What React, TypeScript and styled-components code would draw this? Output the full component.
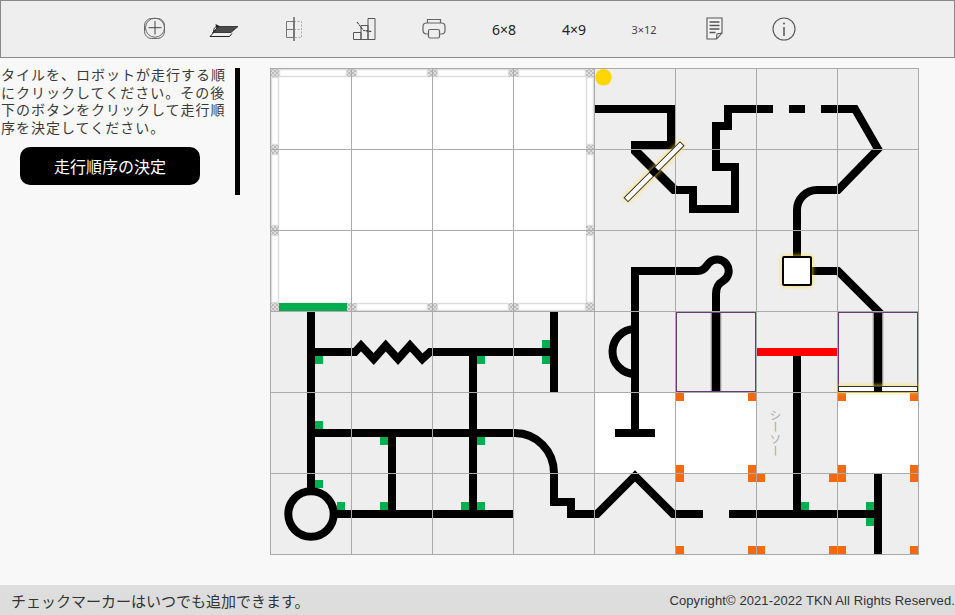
import { createGlobalStyle, styled } from "styled-components";

const GlobalStyle = createGlobalStyle`
    html, body {
        margin: 0;
        padding: 0;
        background-color: #f8f8f8;
        font-family: "Noto Sans CJK JP", "Noto Sans", sans-serif;
    }
`

const Wrapper = styled.div`
    display: flex;
    flex-direction: column;
    width: 955px;
    height: 615px;
    overflow: hidden;
`

const Toolbar = styled.div`
    display: flex;
    align-items: center;
    box-sizing: border-box;
    height: 58px;
    padding-left: 118px;
    background-color: #eeeeee;
    border: 1px solid #888888;
`

const ToolButton = styled.div`
    display: flex;
    align-items: center;
    justify-content: center;
    box-sizing: border-box;
    width: 70px;
    height: 56px;
    padding-bottom: 2px;
`

const SizeButton = styled.div<{ $small?: boolean }>`
    display: flex;
    align-items: center;
    justify-content: center;
    width: 70px;
    height: 56px;
    font-family: "Noto Sans", sans-serif;
    font-size: ${(props) => (props.$small ? "11px" : "14px")};
    color: ${(props) => (props.$small ? "#444444" : "#222222")};
`

const Main = styled.div`
    display: flex;
    flex: 1;
    padding-top: 10px;
`

const Side = styled.div`
    width: 235px;
    flex-shrink: 0;
`

const Guide = styled.p`
    width: 226px;
    margin: -2px 0 0 1px;
    font-size: 14px;
    letter-spacing: 1px;
    line-height: 17.5px;
    color: #3a3a3a;
`

const DecideButton = styled.button`
    display: block;
    width: 180px;
    height: 38px;
    margin: 11px 0 0 20px;
    padding: 0;
    border: none;
    border-radius: 10px;
    background-color: #000000;
    color: #ffffff;
    font-family: inherit;
    font-size: 16px;
`

const Splitter = styled.div`
    width: 5px;
    height: 127px;
    flex-shrink: 0;
    background-color: #000000;
`

const Board = styled.div`
    position: relative;
    display: grid;
    grid-template-columns: repeat(8, 81px);
    grid-template-rows: repeat(6, 81px);
    align-self: flex-start;
    margin-left: 30px;
    border-right: 1px solid #aaaaaa;
    border-bottom: 1px solid #aaaaaa;
`

const Tile = styled.div<{ $white: boolean }>`
    border-left: 1px solid #aaaaaa;
    border-top: 1px solid #aaaaaa;
    background-color: ${(props) => (props.$white ? "#ffffff" : "#eeeeee")};
    svg {
        display: block;
        width: 80px;
        height: 80px;
    }
`

const ArtDefs = styled.svg`
    position: absolute;
    width: 0;
    height: 0;
`

const Overlay = styled.svg`
    position: absolute;
    top: 0;
    left: 0;
    width: 649px;
    height: 487px;
    pointer-events: none;
`

const Glow = styled.g`
    filter: drop-shadow(0 0 2.5px #ffdc40);
`

const SeesawLabel = styled.span`
    position: absolute;
    left: 498px;
    top: 341px;
    writing-mode: vertical-rl;
    font-size: 12px;
    line-height: 14px;
    color: #aaaaaa;
`

const Footer = styled.div`
    display: flex;
    align-items: center;
    justify-content: space-between;
    height: 30px;
    padding-left: 11px;
    background-color: #dddddd;
`

const Notice = styled.span`
    font-size: 15px;
    color: #333333;
`

const Copyright = styled.span`
    font-family: "Liberation Sans", sans-serif;
    font-size: 13px;
    letter-spacing: 0.1px;
    color: #333333;
    white-space: nowrap;
`

const black = { fill: "none", stroke: "#000", strokeWidth: 8 };

// 白いタイル (列,行)
const whiteTiles = new Set([
    "0,0", "1,0", "2,0", "3,0",
    "0,1", "1,1", "2,1", "3,1",
    "0,2", "1,2", "2,2", "3,2",
    "4,4", "5,4", "7,4",
]);

const greens = [
    [315, 356], [477, 356], [542, 340], [542, 356], [315, 421], [380, 437], [477, 437],
    [315, 480], [337, 502], [380, 502], [461, 502], [477, 502],
    [801, 502], [866, 502], [866, 518],
];

const oranges: number[][] = [];
[676, 748, 838, 910].forEach((x) => [393, 465].forEach((y) => oranges.push([x, y])));
[676, 748, 757, 829, 838, 910].forEach((x) => [474, 546].forEach((y) => oranges.push([x, y])));

const hStrips = [[279, 347], [356, 428], [437, 509], [518, 586]];
const vStrips = [[77, 145], [154, 226], [235, 303]];
const hChecks = [[271, 279], [347, 356], [428, 437], [509, 518], [586, 594]];
const vChecks = [[69, 77], [145, 154], [226, 235], [303, 311]];

function BoardArt() {
    return (
        <ArtDefs>
            <defs>
                <pattern id="check" width="4" height="4" patternUnits="userSpaceOnUse">
                    <rect width="4" height="4" fill="#dddddd" />
                    <rect width="2" height="2" fill="#bbbbbb" />
                    <rect x="2" y="2" width="2" height="2" fill="#bbbbbb" />
                </pattern>
                <g id="board-art">
                    {hStrips.map(([a, b]) =>
                        [69, 303].map((y) => (
                            <rect key={a + "-" + y} x={a + 0.5} y={y + 0.5} width={b - a - 1} height={7} fill="#fff" stroke="#dddddd" strokeWidth="1.5" />
                        ))
                    )}
                    {vStrips.map(([a, b]) =>
                        [271, 586].map((x) => (
                            <rect key={a + "-" + x} x={x + 0.5} y={a + 0.5} width={7} height={b - a - 1} fill="#fff" stroke="#dddddd" strokeWidth="1.5" />
                        ))
                    )}
                    {hChecks.map(([a, b]) =>
                        [69, 303].map((y) => (
                            <rect key={a + "c" + y} x={a} y={y} width={b - a} height={8} fill="url(#check)" />
                        ))
                    )}
                    {vChecks.map(([a, b]) =>
                        [271, 586].map((x) => (
                            <rect key={a + "c" + x} x={x} y={a} width={8} height={b - a} fill="url(#check)" />
                        ))
                    )}
                    <rect x="279" y="303" width="68" height="8" fill="#00ad4e" />

                    {greens.map(([x, y]) => (
                        <rect key={x + "g" + y} x={x} y={y} width="8" height="8" fill="#00b050" />
                    ))}
                    {oranges.map(([x, y]) => (
                        <rect key={x + "o" + y} x={x} y={y} width="8" height="8" fill="#f5690f" />
                    ))}

                    {/* 左下のコース */}
                    <path {...black} d="M311 311V490" />
                    <circle {...black} fill="#eeeeee" cx="311" cy="514" r="22.7" />
                    <path {...black} d="M315 352H355L361 345.500L373.700 359L385.700 345.500L398 359L410 345.500L422.300 359L430 352H554" />
                    <path {...black} d="M554 311V392" />
                    <path {...black} d="M473 352V514" />
                    <path {...black} d="M311 433H515A39 40 0 0 1 554 473V502H571V514H597L635 476L673 514H703" />
                    <path {...black} d="M392 433V514" />
                    <path {...black} d="M337 514H513" />

                    {/* 右上のコース */}
                    <path {...black} d="M595 109H671V145H631" />
                    <path fill="#000" d="M631 149.500H640.500L677 186V194H672L631 153Z" />
                    <path {...black} d="M675 190H693V209H735V167H716V126H728V109H773" />
                    <path {...black} d="M789 109H805" />
                    <path {...black} d="M821 109H855L878 149L838 190H817A20 20 0 0 0 797 210V265" />
                    <path {...black} d="M812 271H838L881 314" />

                    {/* ループ */}
                    <path {...black} d="M635 392V271H698C705 271 706 266 709 263A11.500 11.500 0 1 1 723 281C718 284 716 287 716 294V392" />
                    <path {...black} d="M635 311V329M639 329H635A22.500 22.500 0 0 0 635 374H639M635 374V433M615 433H655" />

                    {/* トンネル */}
                    <path fill="none" stroke="#000" strokeOpacity="0.12" strokeWidth="12" d="M716 312V392M878 312V392" />
                    <path fill="none" stroke="#000" strokeOpacity="0.3" strokeWidth="10" d="M716 312V392M878 312V392" />
                    <path {...black} d="M878 311V392" />
                    <rect x="676.500" y="312.500" width="79" height="79" fill="none" stroke="#6b3a78" />
                    <rect x="838.500" y="312.500" width="79" height="79" fill="none" stroke="#6b3a78" />

                    {/* シーソー */}
                    <path {...black} d="M797 352V514" />
                    <rect x="757" y="348" width="80" height="8" fill="#ff0000" />
                    <path {...black} d="M729 514H878" />
                    <path {...black} d="M878 474V554" />
                </g>
            </defs>
        </ArtDefs>
    );
}

function PlusIcon() {
    return (
        <svg width="24" height="24" viewBox="0 0 24 24" fill="none" stroke="#666" strokeWidth="1">
            <rect x="2.500" y="2.500" width="20" height="20" rx="7" />
            <circle cx="13" cy="11.700" r="9.500" />
            <path d="M13 5V18.500M6.500 11.700H19.500" stroke="#444" />
        </svg>
    );
}

function TiltIcon() {
    return (
        <svg width="30" height="28" viewBox="0 -11 30 28">
            <path d="M9.500 1.500H29L22 7.500H3.500Z" fill="#4a4a4a" stroke="#222" strokeWidth="0.800" />
            <path d="M7 5L1 11.500H20.500L23 8.500" fill="none" stroke="#222" strokeWidth="1" />
            <path d="M4.500 6.500C4.500 3.500 6 1.500 9 1" fill="none" stroke="#333" strokeWidth="1" />
            <path d="M6.500 -1L10.500 1L7.500 4Z" fill="#222" />
        </svg>
    );
}

function MirrorIcon() {
    return (
        <svg width="18" height="26" viewBox="0 -2 18 26" fill="none" stroke="#777" strokeWidth="1">
            <path d="M1.500 4.500H9V20.500H1.500ZM1.500 12.500H9" />
            <path d="M9 4.500H16.500V20.500H9M9 12.500H16.500" strokeDasharray="2 1.500" stroke="#aaa" />
            <path d="M9 0V24" stroke="#666" strokeWidth="1.500" />
        </svg>
    );
}

function StairsIcon() {
    return (
        <svg width="24" height="26" viewBox="0 -2 24 26" fill="none" stroke="#555" strokeWidth="1">
            <path d="M1.500 22.500V15.500H9V22.500ZM9 22.500V8.500H16V22.500ZM16 22.500V1.500H23V22.500Z" />
            <path d="M5 5L11.500 13.500L20 14.500" stroke="#222" strokeDasharray="2.500 0.700" />
        </svg>
    );
}

function PrintIcon() {
    return (
        <svg width="24" height="22" viewBox="0 -1 24 22" fill="none" stroke="#666" strokeWidth="1.200">
            <path d="M5.500 5V1.500H18.500V5" />
            <rect x="1" y="5" width="22" height="11" rx="3.500" />
            <rect x="6.500" y="11.500" width="11" height="8.500" rx="1.500" fill="#eeeeee" />
        </svg>
    );
}

function NoteIcon() {
    return (
        <svg width="17" height="23" viewBox="0 0 17 23" fill="none" stroke="#555" strokeWidth="1.100">
            <path d="M1 1H16V16L10.500 22H1Z" fill="#f4f4f4" />
            <path d="M3.500 5H13.500M3.500 8.500H13.500M3.500 12H13.500M3.500 15.500H9.500" strokeWidth="1.300" />
            <path d="M16 16L11 17L10.500 22" />
        </svg>
    );
}

function InfoIcon() {
    return (
        <svg width="24" height="26" viewBox="0 -2 24 26" fill="none" stroke="#555" strokeWidth="1.100">
            <circle cx="12" cy="12" r="11" />
            <path d="M12 10V19" strokeWidth="1.500" />
            <circle cx="12" cy="6.500" r="1" fill="#555" stroke="none" />
        </svg>
    );
}

const rows = [0, 1, 2, 3, 4, 5];
const cols = [0, 1, 2, 3, 4, 5, 6, 7];

function App() {
    return (
        <Wrapper>
            <GlobalStyle />
            <BoardArt />
            <Toolbar>
                <ToolButton><PlusIcon /></ToolButton>
                <ToolButton><TiltIcon /></ToolButton>
                <ToolButton><MirrorIcon /></ToolButton>
                <ToolButton><StairsIcon /></ToolButton>
                <ToolButton><PrintIcon /></ToolButton>
                <SizeButton>6×8</SizeButton>
                <SizeButton>4×9</SizeButton>
                <SizeButton $small>3×12</SizeButton>
                <ToolButton><NoteIcon /></ToolButton>
                <ToolButton><InfoIcon /></ToolButton>
            </Toolbar>
            <Main>
                <Side>
                    <Guide>タイルを、ロボットが走行する順にクリックしてください。その後下のボタンをクリックして走行順序を決定してください。</Guide>
                    <DecideButton>走行順序の決定</DecideButton>
                </Side>
                <Splitter />
                <Board>
                    {rows.map((r) =>
                        cols.map((c) => (
                            <Tile key={c + "," + r} $white={whiteTiles.has(c + "," + r)}>
                                <svg viewBox={`${271 + 81 * c} ${69 + 81 * r} 80 80`}>
                                    <use href="#board-art" />
                                </svg>
                            </Tile>
                        ))
                    )}
                    <Overlay viewBox="270 68 649 487">
                        <circle cx="603.500" cy="77.300" r="8.300" fill="#ffd700" />
                        <Glow>
                            <rect x="783" y="257" width="28" height="28" fill="#fff" stroke="#000" strokeWidth="2" rx="1" />
                        </Glow>
                        <Glow>
                            <rect x="838.500" y="386.500" width="79" height="5" fill="#fff" stroke="#333" />
                        </Glow>
                        <rect x="874" y="387" width="8" height="5" fill="#000" />
                        <Glow>
                            <rect x="614.500" y="169" width="79" height="5.500" fill="#fff" stroke="#333" transform="rotate(-45 654 171.700)" />
                        </Glow>
                        <rect x="650" y="168.500" width="8" height="6.500" fill="#000" transform="rotate(-45 654 171.700)" />
                    </Overlay>
                    <SeesawLabel>シーソー</SeesawLabel>
                </Board>
            </Main>
            <Footer>
                <Notice>チェックマーカーはいつでも追加できます。</Notice>
                <Copyright>Copyright© 2021-2022 TKN All Rights Reserved.</Copyright>
            </Footer>
        </Wrapper>
    );
}

export default App;
